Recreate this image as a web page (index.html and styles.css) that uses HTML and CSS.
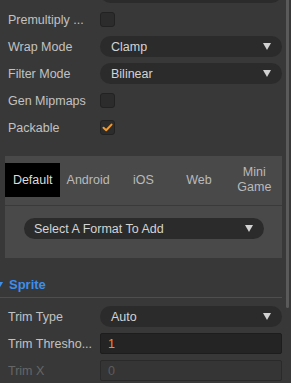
FILE: index.html
```html
<!DOCTYPE html>
<html lang="en">
<head>
  <meta charset="UTF-8">
  <title>Texture Inspector</title>
  <link rel="stylesheet" href="styles.css">
</head>
<body>
  <div class="inspector">
    <!-- texture props -->
    <div class="row row-cut">
      <span class="label"></span>
      <div class="select"><span></span><i class="caret"></i></div>
    </div>
    <div class="row">
      <span class="label">Premultiply ...</span>
      <span class="check"></span>
    </div>
    <div class="row">
      <span class="label">Wrap Mode</span>
      <div class="select"><span>Clamp</span><i class="caret"></i></div>
    </div>
    <div class="row">
      <span class="label">Filter Mode</span>
      <div class="select"><span>Bilinear</span><i class="caret"></i></div>
    </div>
    <div class="row">
      <span class="label">Gen Mipmaps</span>
      <span class="check"></span>
    </div>
    <div class="row">
      <span class="label">Packable</span>
      <span class="check on">
        <svg width="11" height="9" viewBox="0 0 11 9"><path d="M1.5 4.8 L4.2 7.3 L9.5 1.6" fill="none" stroke="#f29a2e" stroke-width="2" stroke-linecap="round" stroke-linejoin="round"/></svg>
      </span>
    </div>

    <!-- platform tabs -->
    <div class="platforms">
      <div class="tabs">
        <span class="tab active">Default</span>
        <span class="tab">Android</span>
        <span class="tab">iOS</span>
        <span class="tab">Web</span>
        <span class="tab">Mini<br>Game</span>
      </div>
      <div class="tab-body">
        <div class="select wide"><span>Select A Format To Add</span><i class="caret"></i></div>
      </div>
    </div>

    <!-- sprite section -->
    <div class="section-head"><i class="fold"></i>Sprite</div>
    <div class="row">
      <span class="label">Trim Type</span>
      <div class="select"><span>Auto</span><i class="caret"></i></div>
    </div>
    <div class="row">
      <span class="label">Trim Thresho...</span>
      <div class="input"><span class="num">1</span></div>
    </div>
    <div class="row disabled">
      <span class="label">Trim X</span>
      <div class="input"><span>0</span></div>
    </div>
  </div>
  <div class="scroll-thumb"></div>
</body>
</html>
```

FILE: styles.css
```css
body { margin: 0; background: #383838; font-family: "Liberation Sans", Arial, sans-serif; font-size: 12.5px; color: #c2c2c2; overflow: hidden; position: relative; height: 383px; }
.inspector { width: 282px; }
/* rows */
.row { height: 27px; display: flex; align-items: center; padding-left: 8px; }
.row-cut { margin-top: -21px; }
.label { width: 92px; flex: none; white-space: nowrap; }
.select { flex: 1; height: 21px; border-radius: 11px; background: #2b2b2b; display: flex; align-items: center; justify-content: space-between; padding: 0 11px 0 11px; color: #d4d4d4; }
.caret { display: block; width: 0; height: 0; border-left: 4px solid transparent; border-right: 4px solid transparent; border-top: 7px solid #d2d2d2; }
.check { width: 13px; height: 13px; border: 1px solid #222; border-radius: 3px; background: #2c2c2c; display: flex; align-items: center; justify-content: center; }
.input { flex: 1; height: 19px; border: 1px solid #1d1d1d; border-radius: 2px; background: #242424; display: flex; align-items: center; padding-left: 7px; }
.num { color: #e8922e; }
.disabled .label { color: #666; }
.disabled .input { background: #353535; border-color: #2a2a2a; color: #5c5c5c; }
/* platform tabs */
.platforms { margin: 15px 0 0 5px; background: #494949; }
.tabs { display: flex; padding: 7px 0 8px; border-bottom: 1px solid #3a3a3a; }
.tab { flex: 1; height: 34px; display: flex; align-items: center; justify-content: center; text-align: center; line-height: 15px; color: #bababa; }
.tab.active { background: #000; color: #dcdcdc; }
.tab-body { padding: 12px 18px 19px 19px; }
.select.wide { padding-left: 10px; }
/* sprite section */
.section-head { padding: 19px 0 4px; line-height: 16px; font-size: 13px; font-weight: bold; color: #3d8fea; border-bottom: 1px solid #4e4e4e; margin-bottom: 5px; display: flex; align-items: center; }
.fold { display: block; width: 0; height: 0; margin: 0 6px 0 -5px; border-left: 4px solid transparent; border-right: 4px solid transparent; border-top: 7px solid #3d8fea; }
.scroll-thumb { position: absolute; left: 286px; top: 0; width: 3px; height: 308px; background: #5a5a5a; border-radius: 0 0 2px 2px; }
```
